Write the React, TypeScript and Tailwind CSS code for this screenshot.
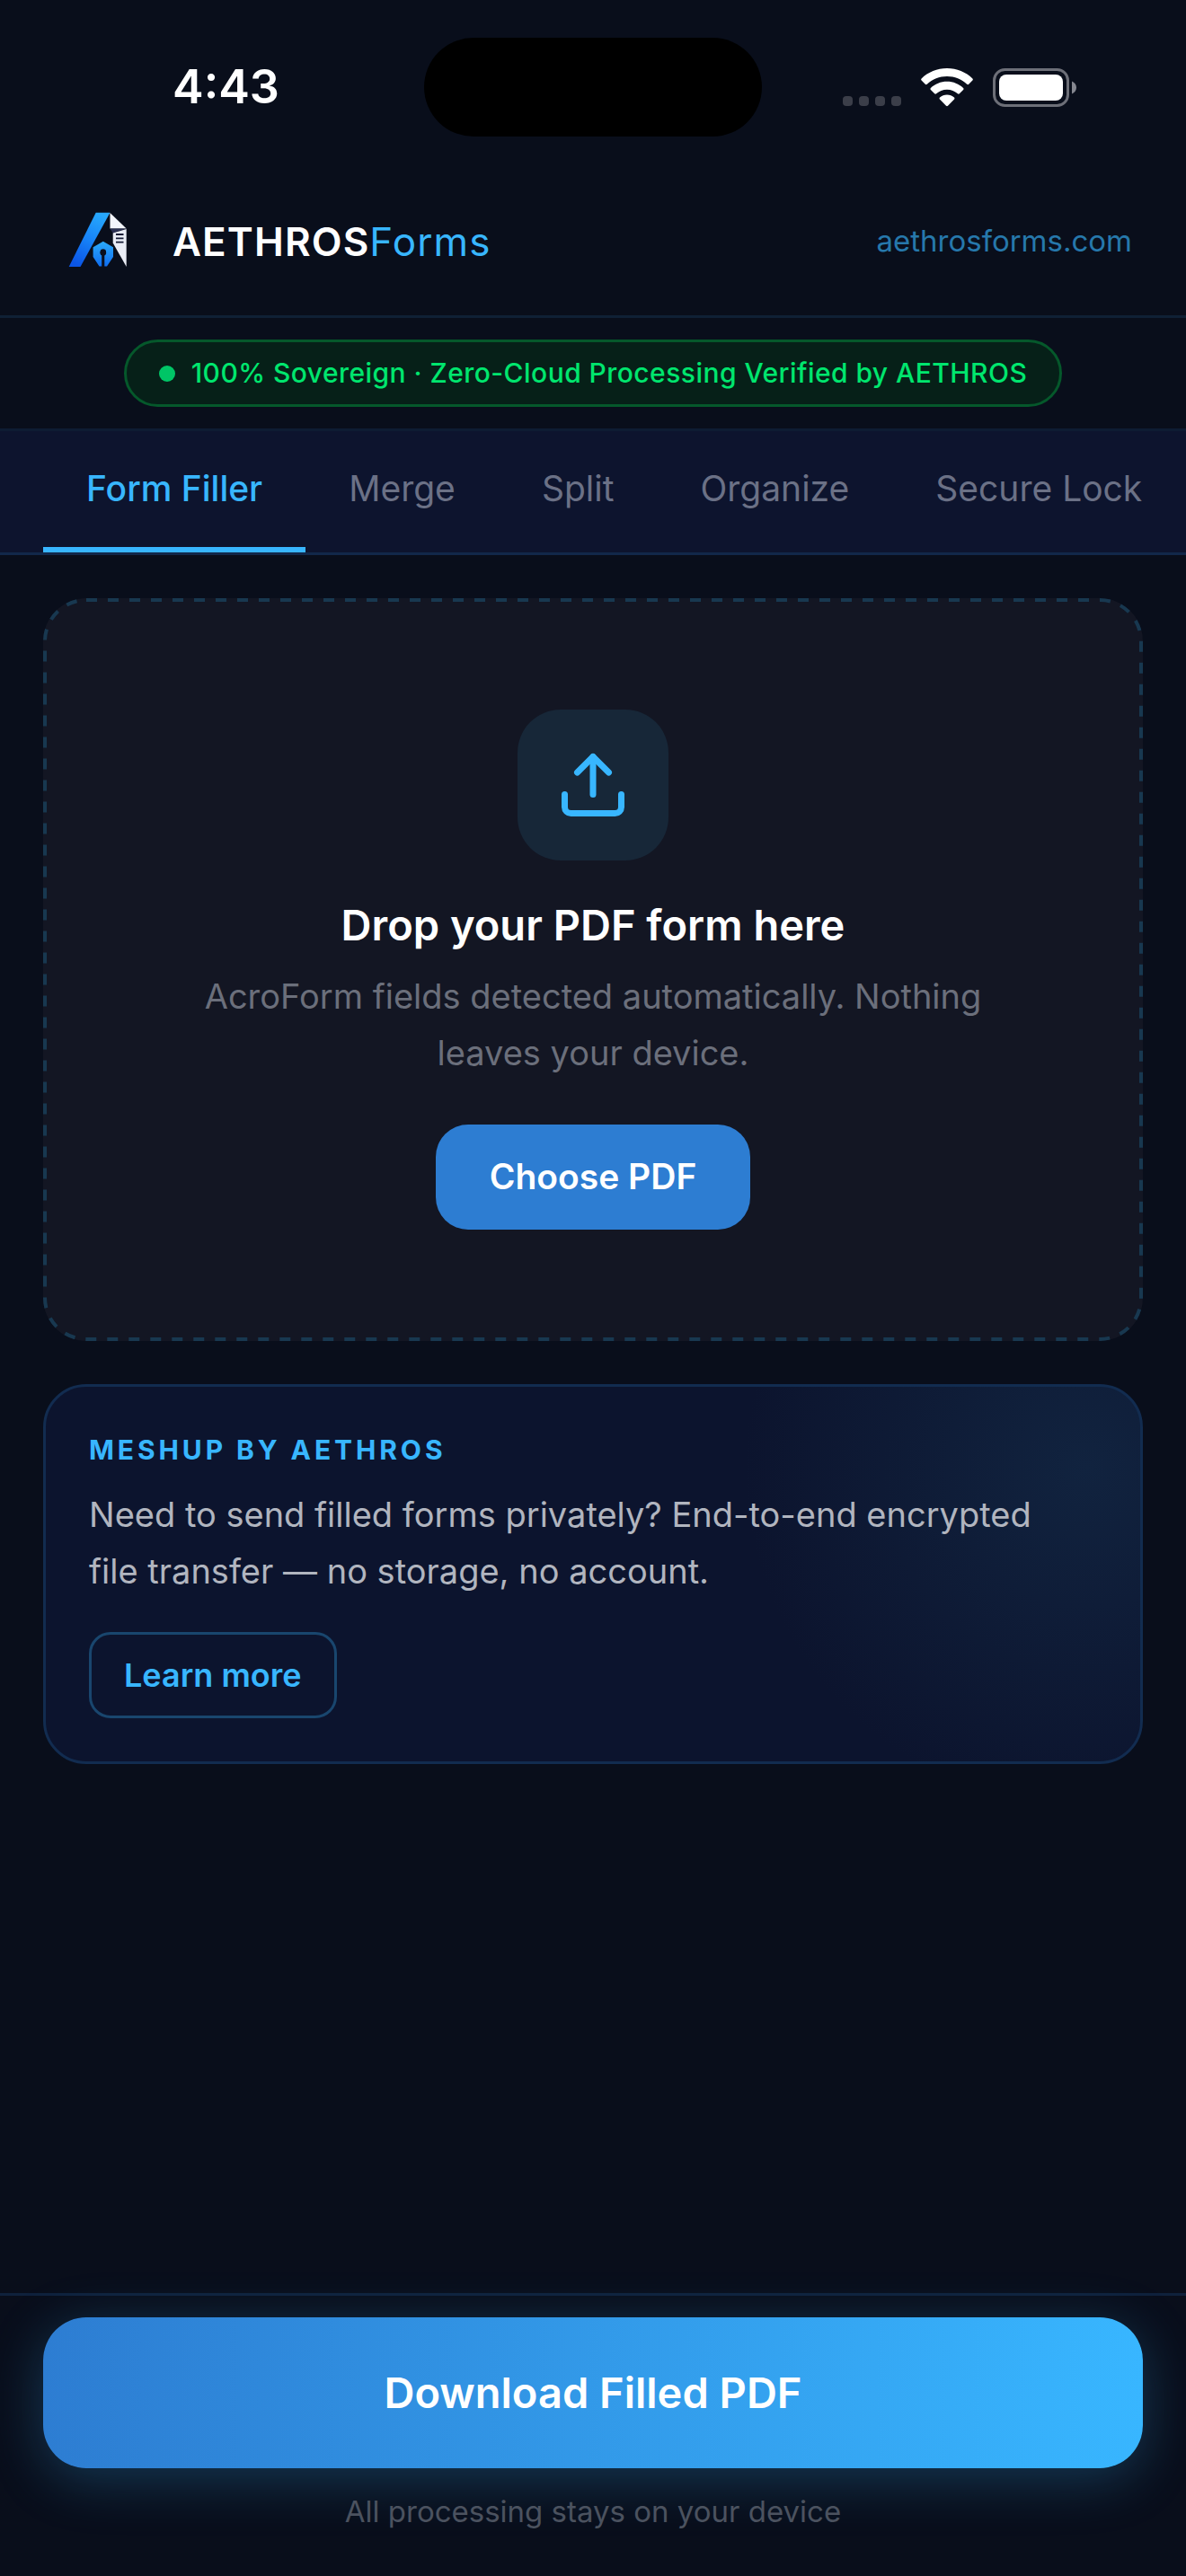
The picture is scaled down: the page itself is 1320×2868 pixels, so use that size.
import { useState } from "react";
import { Upload } from "lucide-react";
import clsx from "clsx";

const TABS = ["Form Filler", "Merge", "Split", "Organize", "Secure Lock"];

function StatusBar() {
  return (
    <div className="grid h-[186px] grid-cols-[1fr_376px_1fr] items-center pt-2">
      <span className="pl-48 text-[52px] leading-none font-semibold text-white">4:43</span>
      <div className="h-[110px] rounded-full bg-black" />
      <div className="flex items-center justify-end gap-[22px] pr-[121px]">
        <svg viewBox="0 0 65 43" className="h-[43px] w-[65px] fill-[#3b3e49]">
          <rect x="0" y="31" width="11" height="11" rx="4" />
          <rect x="18" y="31" width="11" height="11" rx="4" />
          <rect x="36" y="31" width="11" height="11" rx="4" />
          <rect x="54" y="31" width="11" height="11" rx="4" />
        </svg>
        <svg viewBox="0 0 58 43" className="h-[43px] w-[58px] fill-white">
          <path d="M29 0C18 0 8 4.300 .6 11.400c-.6.600-.6 1.500 0 2.100l4.200 4.300c.5.600 1.400.600 2 0C12.700 12.300 20.500 9 29 9s16.300 3.300 22.200 8.800c.6.600 1.500.600 2 0l4.200-4.300c.6-.6.6-1.500 0-2.100C50 4.300 40 0 29 0Z" />
          <path d="M29 14.800c-7 0-13.300 2.700-18.100 7.100-.6.600-.6 1.500 0 2.100l4.300 4.300c.5.500 1.300.500 1.900 0 3.200-2.900 7.300-4.600 11.900-4.600s8.700 1.700 11.900 4.600c.6.500 1.400.500 1.900 0l4.300-4.300c.6-.6.6-1.500 0-2.100-4.800-4.400-11.100-7.100-18.100-7.100Z" />
          <path d="M29 29.500c-3.100 0-5.800 1.100-8 2.900-.6.500-.6 1.500-.1 2l7.100 7.300c.6.600 1.400.600 2 0l7.100-7.300c.5-.5.5-1.500-.1-2-2.200-1.800-4.900-2.900-8-2.900Z" />
        </svg>
        <svg viewBox="0 0 94 43" className="h-[43px] w-[94px]">
          <rect x="1.500" y="1.500" width="82" height="40" rx="12" fill="none" stroke="#6d6f78" strokeWidth="3" />
          <rect x="7" y="7" width="71" height="29" rx="8" fill="#fff" />
          <path d="M88 14.500c3 1.200 5 3.900 5 7s-2 5.800-5 7Z" fill="#858790" />
        </svg>
      </div>
    </div>
  );
}

function Logo() {
  return (
    <svg viewBox="0 0 120 120" className="size-[120px]" aria-hidden="true">
      <defs>
        <linearGradient id="bar" x1="0.700" y1="0" x2="0.300" y2="1">
          <stop offset="0" stopColor="#27a8fc" />
          <stop offset="0.500" stopColor="#1783f8" />
          <stop offset="1" stopColor="#0b55e6" />
        </linearGradient>
        <linearGradient id="nib" x1="0" y1="0" x2="0" y2="1">
          <stop offset="0" stopColor="#2cabfb" />
          <stop offset="1" stopColor="#0f6df0" />
        </linearGradient>
      </defs>
      <path d="M58.700 27.700H74.500L41.500 88H28.700Z" fill="url(#bar)" />
      <path d="M74.500 28L92.700 45.500H74.500Z" fill="#f3f5fb" />
      <path d="M74.500 45.500H92.700L77.700 50.500Z" fill="#2b3052" />
      <path d="M92.700 46V88L77.700 61.500V50.500Z" fill="#e9ecf5" />
      <path d="M81 52H89.500M81 56.300H89.500M81 60.600H89.500" stroke="#151b35" strokeWidth="1.800" />
      <path
        d="M66.800 59.700L78 66.300V77L71 87.500H68.200V75.500A3.400 3.400 0 1 0 65.400 75.500V87.500H62.500L55.600 77V66.300Z"
        fill="url(#nib)"
      />
      <circle cx="66.800" cy="71.500" r="3.200" fill="#0a0f1e" />
      <path d="M65.500 72H68.100V88H65.500Z" fill="#0a0f1e" />
    </svg>
  );
}

function Header() {
  return (
    <header className="flex h-[168px] items-center justify-between border-b-3 border-[#0f2035] pr-[60px] pl-12">
      <div className="flex items-center gap-6">
        <Logo />
        <span className="text-[44px] font-semibold tracking-wide text-white">
          AETHROS<span className="font-normal text-[#38b6ff]">Forms</span>
        </span>
      </div>
      <a href="https://aethrosforms.com" className="text-[33px] text-[#2678ab]">
        aethrosforms.com
      </a>
    </header>
  );
}

function TrustBanner() {
  return (
    <div className="flex justify-center border-b-3 border-[#0e1c33] py-6">
      <p className="flex h-[75px] items-center gap-[18px] rounded-full border-3 border-[#05582b] bg-[#062018] px-9 text-[30px] font-medium tracking-[0.015em] whitespace-nowrap text-[#00e66e]">
        <span className="size-[18px] rounded-full bg-[#00c566]" />
        100% Sovereign · Zero-Cloud Processing Verified by AETHROS
      </p>
    </div>
  );
}

function TabBar({ active, onChange }: { active: string; onChange: (tab: string) => void }) {
  return (
    <nav className="flex overflow-x-auto border-b-3 border-[#12284a] bg-[#0d142e] pl-12">
      {TABS.map((tab) => (
        <button
          key={tab}
          type="button"
          onClick={() => onChange(tab)}
          className={clsx(
            "h-[135px] shrink-0 border-b-6 px-12 text-[39px]",
            tab === active
              ? "border-[#38b6ff] font-medium text-[#38b6ff]"
              : "border-transparent text-[#6b7186]"
          )}
        >
          {tab}
        </button>
      ))}
    </nav>
  );
}

function DropZone() {
  return (
    <section className="relative flex flex-col items-center rounded-[48px] bg-[#131623] px-36 py-[124px] text-center">
      {/* long-gap dashes, which border-dashed can't do */}
      <svg className="absolute inset-0 size-full" aria-hidden="true">
        <rect
          x="2"
          y="2"
          rx="46"
          className="h-[calc(100%-4px)] w-[calc(100%-4px)] fill-none stroke-[#183850]"
          strokeWidth="4"
          strokeDasharray="12 12"
        />
      </svg>
      <div className="flex size-[168px] items-center justify-center rounded-[48px] bg-[#172738]">
        <Upload className="size-[84px] text-[#38b6ff]" />
      </div>
      <h2 className="mt-11 text-[47px] leading-[56px] font-semibold text-white">
        Drop your PDF form here
      </h2>
      <p className="mt-5 text-[38px] leading-[63px] text-[#6b6f7b]">
        AcroForm fields detected automatically. Nothing leaves your device.
      </p>
      <button
        type="button"
        className="relative mt-12 h-[117px] rounded-[36px] bg-[#2d7dd2] px-[60px] text-[39px] font-semibold text-white"
      >
        Choose PDF
      </button>
    </section>
  );
}

function MeshupCard() {
  return (
    <section className="flex flex-col items-start rounded-[48px] border-3 border-[#122c50] bg-[#0c142e] bg-[radial-gradient(circle_at_calc(100%-60px)_90px,#11233f,#0c142e00_380px)] p-12">
      <h3 className="text-[30px] leading-[45px] font-bold tracking-[0.13em] text-[#38b6ff] uppercase">
        Meshup by Aethros
      </h3>
      <p className="mt-[18px] max-w-[1080px] text-[38px] leading-[63px] text-[#b1b5bf]">
        Need to send filled forms privately? End-to-end encrypted file transfer — no storage, no
        account.
      </p>
      <a
        href="#meshup"
        className="mt-9 flex h-24 items-center rounded-[24px] border-3 border-[#19466e] px-9 text-[36px] font-semibold text-[#38b6ff]"
      >
        Learn more
      </a>
    </section>
  );
}

function DownloadBar() {
  return (
    <footer className="flex flex-col gap-6 border-t-3 border-[#0f213c] px-12 pt-6 pb-12 text-center">
      <button
        type="button"
        className="h-[168px] rounded-[48px] bg-linear-to-r from-[#2d7dd2] to-[#38b6ff] text-[47px] font-semibold text-white shadow-[0_12px_60px_#38b6ff40]"
      >
        Download Filled PDF
      </button>
      <p className="text-[33px] leading-[48px] text-[#4b525f]">
        All processing stays on your device
      </p>
    </footer>
  );
}

export default function App() {
  const [tab, setTab] = useState(TABS[0]);

  return (
    <div className="flex min-h-screen flex-col bg-[#090e1b] font-[Inter,sans-serif]">
      <StatusBar />
      <Header />
      <TrustBanner />
      <TabBar active={tab} onChange={setTab} />
      <main className="flex flex-1 flex-col gap-12 p-12">
        <DropZone />
        <MeshupCard />
      </main>
      <DownloadBar />
    </div>
  );
}
